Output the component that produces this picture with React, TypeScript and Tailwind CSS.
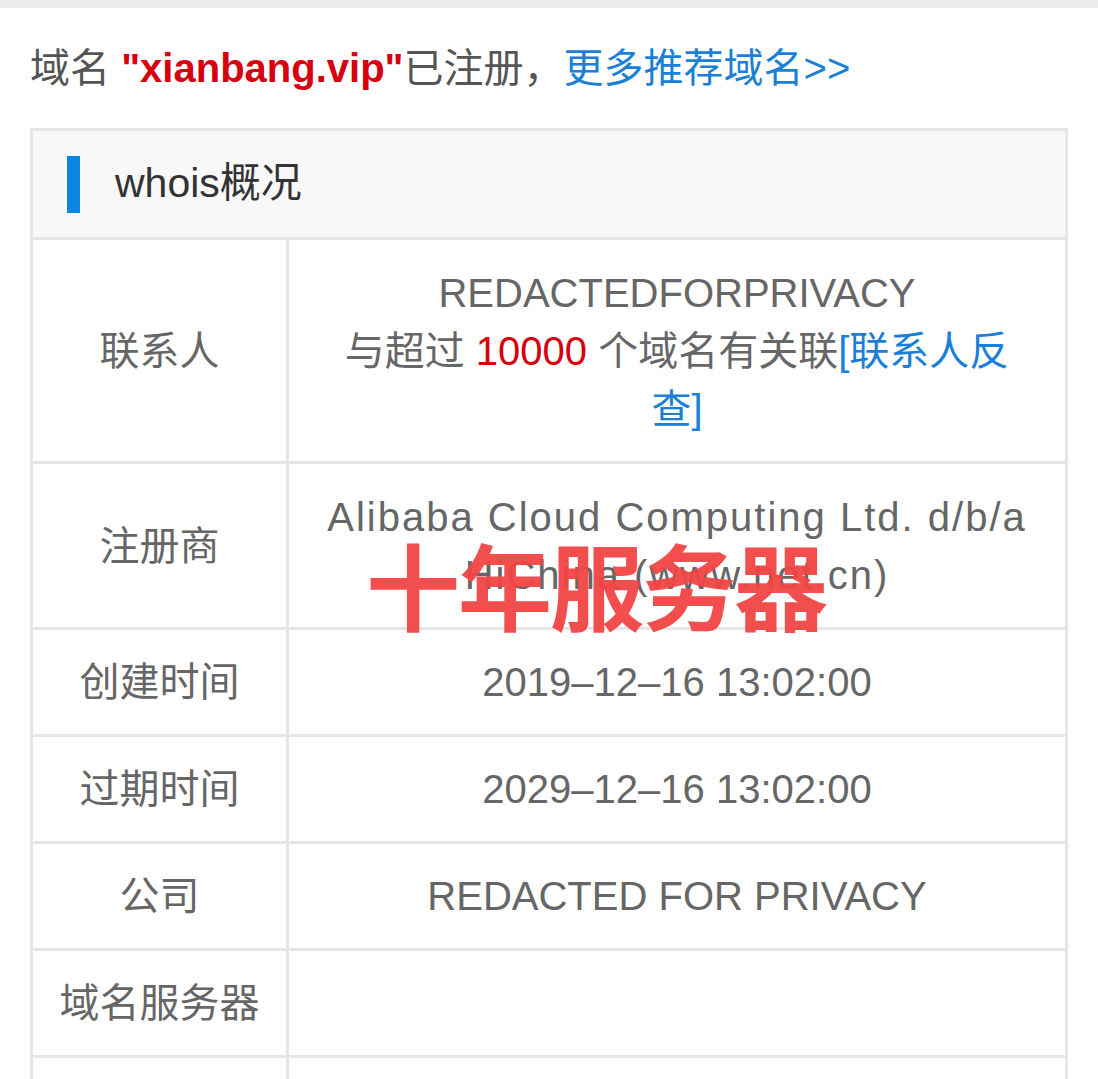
import React from "react";

const font = { fontFamily: '"Liberation Sans", "Noto Sans CJK SC", sans-serif' };

function Row({ label, h, children }: { label: string; h: string; children?: React.ReactNode }) {
  return (
    <div className={`flex border-t-[3px] border-[#e6e6e6] ${h}`}>
      <div className="w-[256px] shrink-0 border-r-[3px] border-[#e6e6e6] flex items-center justify-center text-[40px] text-[#666]">
        {label}
      </div>
      <div className="flex-1 flex items-center justify-center text-center text-[40px] text-[#666] leading-[58px] px-[34px]">
        {children}
      </div>
    </div>
  );
}

export default function App() {
  return (
    <div className="w-[1098px] h-[1079px] overflow-hidden bg-white relative" style={font}>
      <div className="h-[8px] bg-[#ececec]" />
      <div className="pl-[30px] pt-[38px] h-[120px] text-[40px] text-[#555] leading-[44px] whitespace-nowrap">
        域名 <span className="font-bold text-[#d7000f]">"xianbang.vip"</span>已注册，<span className="text-[#1a7fd6]">更多推荐域名&gt;&gt;</span>
      </div>
      <div className="mx-[30px] border-x-[3px] border-[#e6e6e6]">
        <div className="h-[109px] border-t-[3px] border-[#e6e6e6] bg-[#f8f8f8] flex items-center">
          <div className="ml-[34px] w-[13px] h-[57px] bg-[#0b86e0]" />
          <div className="ml-[35px] text-[41px] text-[#333]">whois概况</div>
        </div>
        <Row label="联系人" h="h-[224px]">
          <div>
            <div>REDACTEDFORPRIVACY</div>
            <div>
              与超过 <span className="text-[#d7000f]">10000</span> 个域名有关联<span className="text-[#1a7fd6]">[联系人反查]</span>
            </div>
          </div>
        </Row>
        <Row label="注册商" h="h-[166px]">
          <div className="tracking-[2px]">Alibaba Cloud Computing Ltd. d/b/a HiChina (www.net.cn)</div>
        </Row>
        <Row label="创建时间" h="h-[107px]">2019–12–16 13:02:00</Row>
        <Row label="过期时间" h="h-[107px]">2029–12–16 13:02:00</Row>
        <Row label="公司" h="h-[107px]">REDACTED FOR PRIVACY</Row>
        <Row label="域名服务器" h="h-[107px]" />
        <Row label="" h="h-[107px]" />
      </div>
      <div
        className="absolute left-[366px] top-[536px] text-[94px] font-bold text-[#f24545] leading-none tracking-[-2px] opacity-95"
        style={{ fontFamily: '"Noto Sans CJK SC", sans-serif' }}
      >
        十年服务器
      </div>
    </div>
  );
}
